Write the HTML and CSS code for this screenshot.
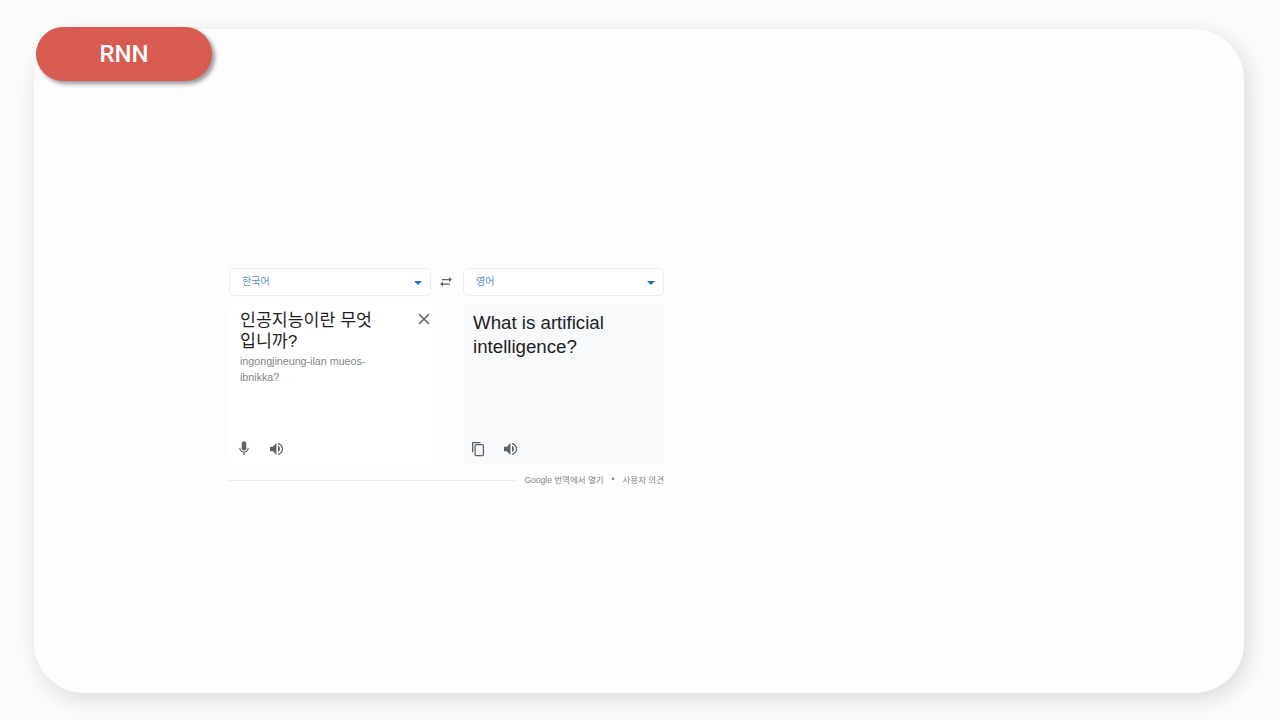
FILE: index.html
```html
<!DOCTYPE html>
<html lang="ko">
<head>
    <meta charset="UTF-8">
    <title>RNN</title>
    <link rel="stylesheet" href="styles.css">
</head>
<body>
    <div class="slide">
        <div class="badge">RNN</div>
        <div class="translate">
            <div class="lang-row">
                <div class="lang-select">
                    <span>한국어</span>
                    <i class="caret"></i>
                </div>
                <div class="swap">
                    <svg width="14" height="14" viewBox="0 0 14 14"><path d="M10 2v1.900H3v1.300h7v1.900L13 4.500z M4 6.600L1 9l3 2.500V9.700h7V8.400H4z" fill="#5f6368"/></svg>
                </div>
                <div class="lang-select">
                    <span>영어</span>
                    <i class="caret"></i>
                </div>
            </div>
            <div class="panels">
                <div class="panel source">
                    <div class="source-top">
                        <div class="source-text">인공지능이란 무엇입니까?</div>
                        <svg class="clear" width="12" height="12" viewBox="0 0 12 12"><path d="M1 1l10 10M11 1L1 11" stroke="#5f6368" stroke-width="1.600" fill="none"/></svg>
                    </div>
                    <div class="roman">ingongjineung-ilan mueos-ibnikka?</div>
                    <div class="tools">
                        <svg width="12" height="16" viewBox="0 0 12 16"><path d="M6 9.500c1.300 0 2.300-1 2.300-2.300V2.500C8.300 1.200 7.300.2 6 .2S3.700 1.200 3.700 2.500v4.700c0 1.300 1 2.300 2.300 2.300z" fill="#5f6368"/><path d="M1.800 6.800c0 2.500 1.900 4.300 4.200 4.300s4.200-1.800 4.200-4.300M6 11v3" stroke="#5f6368" stroke-width="1.200" fill="none"/></svg>
                        <svg width="15" height="14" viewBox="0 0 15 14"><path d="M1 4.800v4.400h2.800L7.400 13V1L3.800 4.800z" fill="#5f6368"/><path d="M9 3.800c1.300.7 2 1.800 2 3.200s-.7 2.500-2 3.200z" fill="#5f6368"/><path d="M9 1.600c2.700.7 4.500 2.800 4.500 5.400S11.700 11.700 9 12.400" stroke="#5f6368" stroke-width="1.200" fill="none"/></svg>
                    </div>
                </div>
                <div class="panel target">
                    <div class="target-text">What is artificial intelligence?</div>
                    <div class="tools">
                        <svg width="14" height="16" viewBox="0 0 14 16"><path d="M9.500 1H2.200C1.500 1 1 1.500 1 2.200v9h1.300v-9h7.200z" fill="#5f6368"/><rect x="4.100" y="3.700" width="8.300" height="11" rx="1" stroke="#5f6368" stroke-width="1.300" fill="none"/></svg>
                        <svg width="15" height="14" viewBox="0 0 15 14"><path d="M1 4.800v4.400h2.800L7.400 13V1L3.800 4.800z" fill="#5f6368"/><path d="M9 3.800c1.300.7 2 1.800 2 3.200s-.7 2.500-2 3.200z" fill="#5f6368"/><path d="M9 1.600c2.700.7 4.500 2.800 4.500 5.400S11.700 11.700 9 12.400" stroke="#5f6368" stroke-width="1.200" fill="none"/></svg>
                    </div>
                </div>
            </div>
            <div class="footer">
                <div class="footer-line"></div>
                <span>Google 번역에서 열기</span>
                <span class="dot">•</span>
                <span>사용자 의견</span>
            </div>
        </div>
    </div>
</body>
</html>
```

FILE: styles.css
```css
body {
    margin: 0;
    width: 1280px;
    height: 720px;
    overflow: hidden;
    background-color: #fbfbfb;
    font-family: "Liberation Sans", "Noto Sans CJK KR", sans-serif;
    padding: 29px 36px 27px 34px;
    box-sizing: border-box;
}
.slide {
    position: relative;
    height: 664px;
    background-color: #fdfdfd;
    border-radius: 50px;
    box-shadow: 4px 6px 22px rgba(0, 0, 0, 0.13);
    padding: 239px 0 0 195px;
    box-sizing: border-box;
}
.badge {
    position: absolute;
    left: 2px;
    top: -2px;
    width: 176px;
    height: 54px;
    border-radius: 27px;
    background-color: #d85b52;
    box-shadow: 3px 3px 4px rgba(0, 0, 0, 0.4);
    color: #ffffff;
    font-family: Roboto, sans-serif;
    font-size: 24px;
    font-weight: 500;
    line-height: 54px;
    text-align: center;
}
.translate {
    width: 435px;
}
.lang-row {
    display: grid;
    grid-template-columns: 202px 32px 201px;
    height: 28px;
}
.lang-select {
    display: flex;
    align-items: center;
    justify-content: space-between;
    padding: 0 8px 0 12px;
    border: 1px solid #eceef1;
    border-radius: 5px;
    background-color: #ffffff;
    color: #5b8fd8;
    font-size: 10px;
    box-sizing: border-box;
}
.lang-select span {
    position: relative;
    top: -2px;
}
.caret {
    width: 0;
    height: 0;
    margin-top: 2px;
    border-left: 4px solid transparent;
    border-right: 4px solid transparent;
    border-top: 4px solid #1a6fd0;
}
.swap {
    display: flex;
    align-items: center;
    justify-content: center;
    padding-right: 2px;
}
.panels {
    display: grid;
    grid-template-columns: 202px 201px;
    gap: 32px;
    margin-top: 8px;
    height: 160px;
}
.panel {
    position: relative;
    box-sizing: border-box;
    border-radius: 6px;
}
.source {
    padding: 4px 0 0 11px;
    background-color: #ffffff;
}
.source-top {
    display: flex;
    justify-content: space-between;
    align-items: flex-start;
    padding-top: 2px;
}
.source-text {
    width: 140px;
    font-size: 17.300px;
    line-height: 21px;
    color: #1f1f1f;
}
.clear {
    margin-top: 3px;
    margin-right: 1px;
}
.roman {
    width: 136px;
    margin-top: 2px;
    font-size: 10.700px;
    line-height: 15.500px;
    color: #80868b;
}
.target {
    background-color: #f8f9fb;
    padding: 7px 11px 0 10px;
}
.target-text {
    font-size: 18.700px;
    line-height: 24px;
    color: #202124;
}
.tools {
    position: absolute;
    left: 8px;
    bottom: 7px;
    display: flex;
    align-items: center;
    gap: 18px;
}
.source .tools {
    left: 9px;
    gap: 19px;
}
.footer {
    display: flex;
    align-items: center;
    margin-top: 8px;
    height: 14px;
    font-size: 8.500px;
    color: #80868b;
}
.footer-line {
    flex: 1;
    height: 1px;
    margin: 3px 9px 0 0;
    background-color: #ebebeb;
}
.dot {
    margin: 0 8px;
}
```
